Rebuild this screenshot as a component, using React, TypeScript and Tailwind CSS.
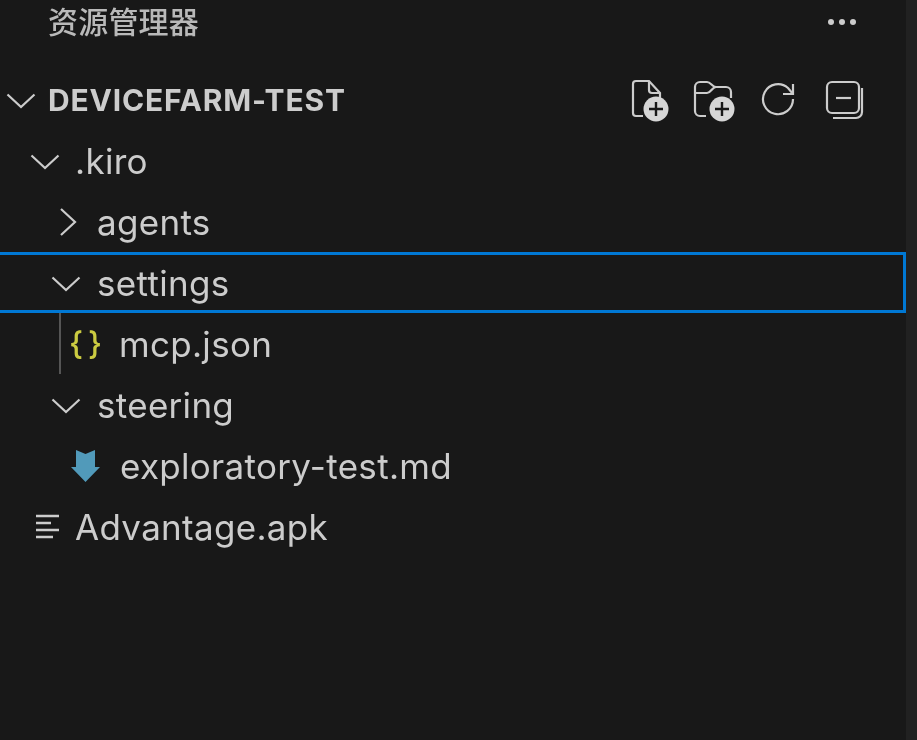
import React from "react";

const font = { fontFamily: '"Inter", "Noto Sans CJK SC", sans-serif' };

function Down() {
  return (
    <svg width="30" height="18" viewBox="0 0 30 18" fill="none" stroke="#cccccc" strokeWidth="2.2" className="shrink-0">
      <path d="M1.5 3.5 L15 16 L28.5 3.5" />
    </svg>
  );
}
function Right() {
  return (
    <svg width="18" height="30" viewBox="0 0 18 30" fill="none" stroke="#cccccc" strokeWidth="2.2" className="shrink-0">
      <path d="M2 2 L16 15 L2 28" />
    </svg>
  );
}
function Plus({ cx, cy }: { cx: number; cy: number }) {
  return (
    <>
      <circle cx={cx} cy={cy} r="12.5" fill="#d6d6d6" />
      <path d={`M${cx - 7} ${cy}H${cx + 7}M${cx} ${cy - 7}V${cy + 7}`} stroke="#181818" strokeWidth="2.4" />
    </>
  );
}

function Row({ pl, icon, gap, children, className = "" }: { pl: string; icon: React.ReactNode; gap: string; children: React.ReactNode; className?: string }) {
  return (
    <div className={`flex items-center h-[61px] ${pl} ${gap} ${className}`}>
      {icon}
      {children}
    </div>
  );
}

function Label({ children }: { children: React.ReactNode }) {
  return <span className="text-[35px] leading-none tracking-[0.3px] pt-[2px] text-[#cccccc]">{children}</span>;
}

export default function App() {
  return (
    <div className="flex w-full h-[740px] overflow-hidden bg-[#181818] text-[#cccccc]" style={font}>
      <div className="flex-1 min-w-0 flex flex-col blur-[0.5px]">
        <div className="flex items-center justify-between h-[44px] pl-[48px] pr-[50px]">
          <span className="text-[30px] leading-none tracking-[0.2px] font-medium text-[#b9b9b9]">资源管理器</span>
          <div className="flex gap-[5px]">
            <span className="w-[6px] h-[6px] rounded-full bg-[#cccccc]" />
            <span className="w-[6px] h-[6px] rounded-full bg-[#cccccc]" />
            <span className="w-[6px] h-[6px] rounded-full bg-[#cccccc]" />
          </div>
        </div>
        <div className="flex items-center justify-between h-[87px] pl-[6px] pr-[41px] pt-[26px] -mb-[1px]">
          <div className="flex items-center gap-[12px] mt-[-1px]">
            <Down />
            <span className="text-[30px] font-bold tracking-[0.8px] text-[#cccccc] leading-none">DEVICEFARM-TEST</span>
          </div>
          <div className="flex items-center mt-[-1px]">
            <svg width="38" height="44" viewBox="0 0 38 44" fill="none" stroke="#cccccc" strokeWidth="2.2">
              <path d="M12 38H5a3 3 0 0 1-3-3V6a3 3 0 0 1 3-3h13l11 12v6" />
              <path d="M18 3v9a3 3 0 0 0 3 3h8" />
              <g stroke="none"><Plus cx={25} cy={31} /></g>
            </svg>
            <svg width="43" height="44" viewBox="0 0 43 44" fill="none" stroke="#cccccc" strokeWidth="2.2" className="ml-[23px]">
              <path d="M14 38H8a5 5 0 0 1-5-5V9a5 5 0 0 1 5-5h7c4 0 5 5 9 5h10a5 5 0 0 1 5 5v6" />
              <path d="M3 15h12c4 0 5-6 9-6" />
              <g stroke="none"><Plus cx={30} cy={31} /></g>
            </svg>
            <svg width="35" height="36" viewBox="0 0 35 36" fill="none" stroke="#cccccc" strokeWidth="2.2" className="ml-[26px] -mt-[3px]">
              <path d="M32 18A15 15 0 1 1 27 7L32 13" />
              <path d="M32 3V13H22" />
            </svg>
            <svg width="40" height="40" viewBox="0 0 40 40" fill="none" stroke="#cccccc" strokeWidth="2.2" className="ml-[29px]">
              <rect x="2" y="2" width="32" height="31" rx="5" />
              <path d="M11 18H26" />
              <path d="M8 38H31a6 6 0 0 0 6-6V8" />
            </svg>
          </div>
        </div>
        <Row pl="pl-[30px]" gap="gap-[15px]" icon={<Down />}>
          <Label>.kiro</Label>
        </Row>
        <Row pl="pl-[59px]" gap="gap-[20px]" icon={<Right />}>
          <Label>agents</Label>
        </Row>
        <Row pl="pl-[51px]" gap="gap-[16px]" icon={<Down />} className="border-[3px] border-l-0 border-[#0078d4]">
          <Label>settings</Label>
        </Row>
        <div className="flex items-center h-[61px] pl-[59px]">
          <div className="w-[2px] h-full bg-[#555555]" />
          <span className="w-[58px] pl-[8px] text-[32px] font-medium leading-none text-[#cbcb41] tracking-[5px]">{"{}"}</span>
          <Label>mcp.json</Label>
        </div>
        <Row pl="pl-[51px]" gap="gap-[16px]" icon={<Down />}>
          <Label>steering</Label>
        </Row>
        <Row pl="pl-[71px]" gap="gap-[20px]" icon={
          <svg width="29" height="32" viewBox="0 0 29 32" className="shrink-0">
            <path d="M5 0L14.5 4L24 0V17H29L14.5 32L0 17H5Z" fill="#519aba" />
          </svg>
        }>
          <Label>exploratory-test.md</Label>
        </Row>
        <Row pl="pl-[35px]" gap="gap-[16px]" icon={
          <svg width="24" height="26" viewBox="0 0 24 26" fill="none" stroke="#cccccc" strokeWidth="2.4" className="shrink-0">
            <path d="M1 2H24M1 9H16M1 16H24M1 23H18" />
          </svg>
        }>
          <Label>Advantage.apk</Label>
        </Row>
      </div>
      <div className="w-[11px] shrink-0 bg-[#212121]" />
    </div>
  );
}
